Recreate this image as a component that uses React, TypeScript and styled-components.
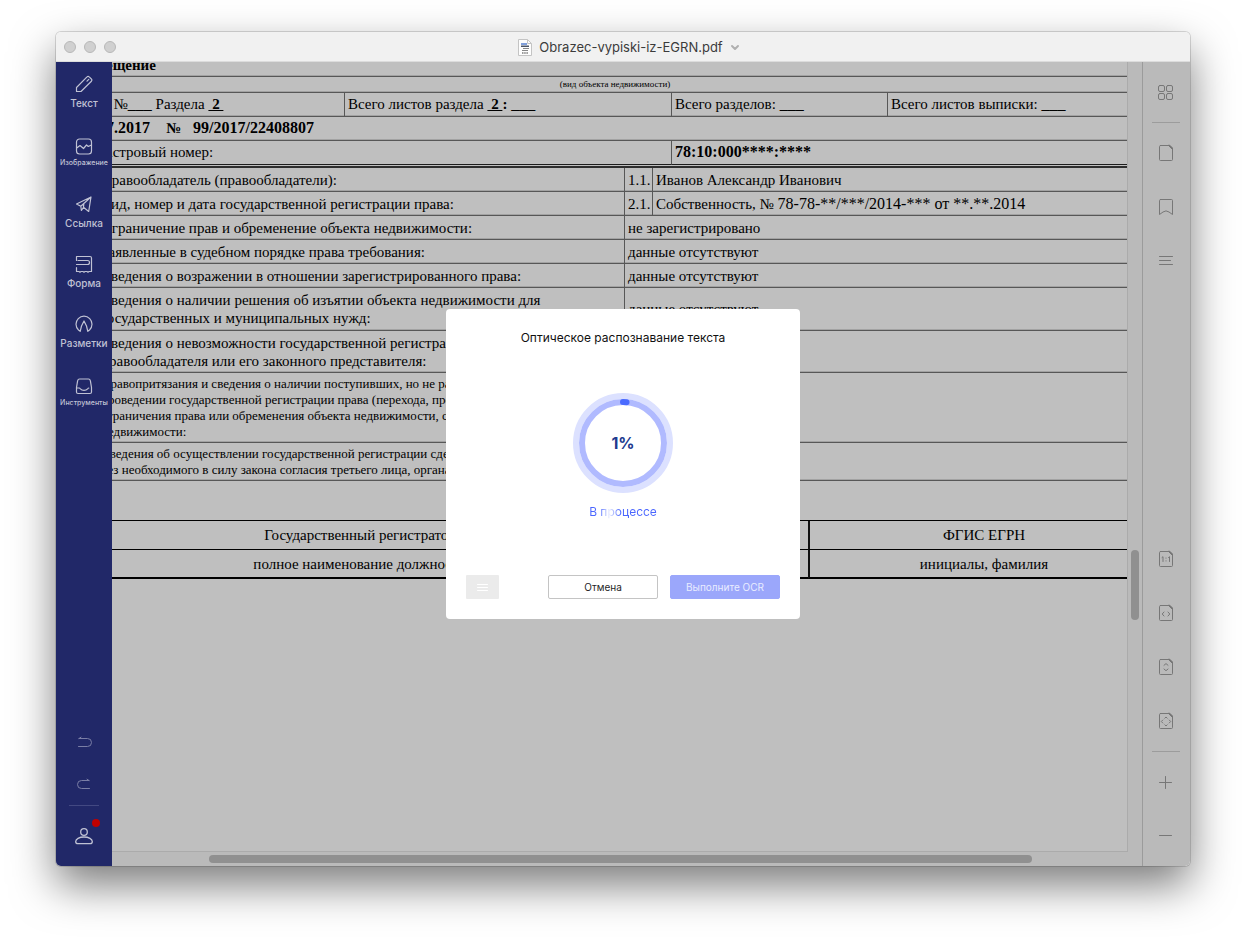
import React from "react";
import styled, { createGlobalStyle } from "styled-components";

const serif = '"Liberation Serif", "Times New Roman", serif';
const sans = 'Inter, "Liberation Sans", sans-serif';

const GlobalStyle = createGlobalStyle`
  * { box-sizing: border-box; }
  body { margin: 0; background: #fff; font-family: ${sans}; }
  button { font: inherit; border: 0; padding: 0; background: none; }
`;

const Desktop = styled.div`
  min-height: 100vh;
  padding: 32px 56px 80px;
  display: flex;
  flex-direction: column;
`;

const Window = styled.section`
  flex: 1;
  display: flex;
  flex-direction: column;
  border-radius: 5px;
  box-shadow: 0 0 0 1px rgba(0, 0, 0, 0.14), 0 19px 44px rgba(0, 0, 0, 0.52);
`;

const TitleBar = styled.header`
  height: 30px;
  display: grid;
  grid-template-columns: 1fr auto 1fr;
  align-items: center;
  background: #f1f1f1;
  border-bottom: 1px solid #dcdcdc;
  border-radius: 5px 5px 0 0;
`;

const Lights = styled.div`
  display: flex;
  gap: 8px;
  padding-left: 8px;
`;

const Light = styled.button`
  width: 12px;
  height: 12px;
  border-radius: 50%;
  background: #d0d0d0;
  border: 1px solid #b8b8b8;
`;

const FileTitle = styled.h1`
  margin: 0;
  padding: 1px 0 0 12px;
  display: flex;
  align-items: center;
  gap: 7px;
  font-size: 13px;
  line-height: 20px;
  font-weight: 400;
  color: #3b3b3b;
`;

const Body = styled.div`
  position: relative;
  flex: 1;
  display: flex;
  background: #bababa;
  border-radius: 0 0 5px 5px;
  overflow: hidden;
`;

const Sidebar = styled.nav`
  width: 56px;
  flex: none;
  display: flex;
  flex-direction: column;
  justify-content: space-between;
  background: #212868;
  color: #c0c2d4;
`;

const Group = styled.div`
  display: flex;
  flex-direction: column;
  align-items: center;
`;

const Tool = styled.button<{ $small?: boolean }>`
  width: 56px;
  height: 60px;
  padding-top: 10px;
  display: flex;
  flex-direction: column;
  align-items: center;
  color: inherit;
  font-size: ${(p) => (p.$small ? 7 : 10)}px;
  font-weight: 500;
  line-height: 14px;
  white-space: nowrap;
`;

const HistoryButton = styled.button`
  width: 56px;
  height: 42px;
  display: grid;
  place-items: center;
  color: #7a7ea6;
`;

const SideLine = styled.hr`
  width: 30px;
  height: 1px;
  margin: 0 0 10px;
  border: 0;
  background: #434982;
`;

const Account = styled.button`
  position: relative;
  width: 40px;
  height: 40px;
  margin-bottom: 10px;
  display: grid;
  place-items: center;
  color: #c0c2d4;
`;

const Dot = styled.span`
  position: absolute;
  top: 3px;
  right: 4px;
  width: 8px;
  height: 8px;
  border-radius: 50%;
  background: #c00000;
`;

const Viewer = styled.main`
  flex: 1;
  min-width: 0;
  display: grid;
  grid-template-columns: minmax(0, 1fr) 14px;
  grid-template-rows: minmax(0, 1fr) 14px;
`;

const Viewport = styled.div`
  overflow: hidden;
  background: #bfbfbf;
  border-right: 1px solid #ababab;
  border-bottom: 1px solid #ababab;
`;

const Sheet = styled.article`
  margin: -9px -31px 0 -36px;
  font-family: ${serif};
  color: #000;
`;

const VTrack = styled.div`
  display: flex;
  flex-direction: column;
  align-items: center;
`;

const HTrack = styled.div`
  display: flex;
  align-items: center;
`;

const Space = styled.span<{ $grow: number }>`
  flex: ${(p) => p.$grow} 1 0;
`;

const Thumb = styled.span<{ $grow: number }>`
  flex: ${(p) => p.$grow} 1 0;
  min-width: 8px;
  min-height: 8px;
  border-radius: 4px;
  background: #909090;
`;

const Table = styled.table<{ $gap?: number }>`
  width: 100%;
  margin-top: ${(p) => p.$gap ?? 0}px;
  table-layout: fixed;
  border-collapse: separate;
  border-spacing: 0;
  font-size: 15px;
  line-height: 18px;
`;

const HeadTable = styled(Table)`
  tr + tr td { padding-bottom: 2px; }
`;

const RightsTable = styled(Table)`
  border-top: 2px solid #2e2e2e;
`;

const SignTable = styled(Table)`
  border-top: 1px solid #000;
`;

const Cell = styled.td<{
  $h?: number;
  $line?: string;
  $divided?: boolean;
  $size?: number;
  $bold?: boolean;
  $lead?: boolean;
}>`
  height: ${(p) => p.$h ?? 24}px;
  padding: 0 2px 0 ${(p) => (p.$lead ? 30 : 3)}px;
  overflow: hidden;
  white-space: pre;
  border-bottom: 1px solid ${(p) => p.$line ?? "#575757"};
  border-left: ${(p) => (p.$divided ? "1px solid #575757" : "0")};
  box-shadow: inset 0 -1px ${(p) => (p.$line ? "transparent" : "#a2a2a2")};
  font-size: ${(p) => p.$size ?? 15}px;
  line-height: ${(p) => (p.$size === 13 ? 16 : 18)}px;
  font-weight: ${(p) => (p.$bold ? 700 : 400)};
`;

const Caption = styled(Cell)`
  padding-right: 7px;
  text-align: center;
  line-height: 12px;
`;

const Num = styled.span`
  font-size: 16px;
`;

const SignCell = styled.td<{ $last?: boolean; $divided?: boolean }>`
  height: 29px;
  padding: 0;
  text-align: center;
  white-space: nowrap;
  border-bottom: ${(p) => (p.$last ? 2 : 1)}px solid #000;
  border-left: ${(p) => (p.$divided ? "2px solid #111" : "0")};
`;

const Panel = styled.aside`
  width: 48px;
  flex: none;
  display: flex;
  flex-direction: column;
  justify-content: space-between;
  padding: 4px 2px 4px 0;
  border-left: 1px solid #9b9b9b;
  color: #777;
`;

const PanelButton = styled.button<{ $h?: number }>`
  width: 44px;
  height: ${(p) => p.$h ?? 54}px;
  display: grid;
  place-items: center;
  color: inherit;
`;

const PanelLine = styled.hr`
  width: 28px;
  height: 1px;
  margin: 2px 0 3px;
  border: 0;
  background: #9c9c9c;
`;

const ZoomLine = styled(PanelLine)`
  margin: 3px 0 4px;
`;

const Overlay = styled.div`
  position: absolute;
  inset: 0;
  display: grid;
  place-items: center;
`;

const Dialog = styled.div`
  width: 354px;
  height: 310px;
  padding: 20px;
  display: flex;
  flex-direction: column;
  align-items: center;
  background: #fff;
  border-radius: 4px;
`;

const DialogTitle = styled.h2`
  margin: 0 0 46px;
  font-size: 12px;
  line-height: 18px;
  font-weight: 400;
  color: #111;
`;

const Progress = styled.div`
  display: grid;
  place-items: center;
  > * { grid-area: 1 / 1; }
`;

const Percent = styled.strong`
  font-size: 16px;
  line-height: 20px;
  font-weight: 700;
  color: #213a8f;
`;

const Status = styled.p`
  margin: 10px 0 0;
  font-size: 12px;
  line-height: 18px;
  color: transparent;
  background: linear-gradient(90deg, #4a66ff 14%, #e8ecff 30%, #4a66ff 46%);
  background-clip: text;
  -webkit-background-clip: text;
`;

const Actions = styled.div`
  width: 100%;
  margin-top: auto;
  display: flex;
  gap: 12px;
`;

const ActionButton = styled.button<{ $primary?: boolean }>`
  width: 110px;
  height: 24px;
  border-radius: 2px;
  border: 1px solid ${(p) => (p.$primary ? "#9ba7fb" : "#c4c4c4")};
  background: ${(p) => (p.$primary ? "#9ba7fb" : "#fff")};
  color: ${(p) => (p.$primary ? "#e9ecff" : "#1f1f1f")};
  font-size: 10px;
  line-height: 14px;
`;

const MenuButton = styled.button`
  width: 33px;
  height: 24px;
  margin-right: auto;
  display: grid;
  place-items: center;
  background: #ebebeb;
  color: #fff;
  border-radius: 1px;
`;

const Icon = ({ w = 24, h = 24, sw = 1, children }: { w?: number; h?: number; sw?: number; children: React.ReactNode }) => (
  <svg width={w} height={h} viewBox={`0 0 ${w} ${h}`} fill="none" stroke="currentColor" strokeWidth={sw} strokeLinecap="round" strokeLinejoin="round" aria-hidden="true">
    {children}
  </svg>
);

const tools = [
  {
    label: "Текст",
    icon: <path d="M4.500 19.500V15.500L15 4.800a1.500 1.500 0 0 1 2.200 0l2.200 2.200a1.500 1.500 0 0 1 0 2.200L9 19.500zM15 9.200l1.800-1.800" />,
  },
  {
    label: "Изображение",
    small: true,
    icon: <path d="M7.500 7h9a3 3 0 0 1 3 3v9a3 3 0 0 1-3 3h-9a3 3 0 0 1-3-3v-9a3 3 0 0 1 3-3zM4.700 16l3.300-2.500 3.500 3 3-3.500 1.800 1.500 3-1.500" />,
  },
  {
    label: "Ссылка",
    icon: <path d="M19 5L4.500 12l4.300 2.200L19 5zM8.800 14.200l.6 4.300 2-3M19 5l-2.300 14.500-5.200-4.200.3-3.500" />,
  },
  {
    label: "Форма",
    icon: <path d="M4.500 8.500v-4h13.500a1.500 1.500 0 0 1 1.500 1.500v13.500h-2.500l-1 .7-1-.7h-2l-1 .7-1-.7h-2l-1 .7-1-.7h-2.500v-4M6 8.500h9.500a2 2 0 0 1 0 4H4.500" />,
  },
  {
    label: "Разметки",
    icon: <path d="M8.200 19.300l-1.700-1.300a8 8 0 1 1 11 0l-1.700 1.300M8.200 19.300l1.300-5.300 2.500-5 2.500 5 1.300 5.300" />,
  },
  {
    label: "Инструменты",
    small: true,
    icon: <path d="M7.500 7h9c1.200 0 1.600.6 1.900 1.800l1.100 6.700v4.500a1.500 1.500 0 0 1-1.500 1.500H6a1.500 1.500 0 0 1-1.500-1.500v-4.500L5.600 8.800C5.900 7.600 6.300 7 7.500 7zM4.500 16h2.700c.6 0 .9.4 1.200.8 1.700 2 5.500 2 7.200 0 .3-.4.6-.8 1.200-.8" />,
  },
];

const PageShape = () => (
  <>
    <path d="M6.500 4.500h9l3 3v11a1 1 0 0 1-1 1h-11a1 1 0 0 1-1-1v-13a1 1 0 0 1 1-1z" />
    <path d="M14.500 4.500l4 4v-1.500l-2.500-2.500z" fill="currentColor" />
  </>
);

const fitButtons = [
  { name: "Реальный размер", mark: <path d="M8 10.500l1-.8v4.800M14.500 10.500l1-.8v4.800M12 11v.2M12 13.800v.2" /> },
  { name: "По ширине", mark: <path d="M10 11l-1.800 2 1.800 2M14 11l1.800 2-1.800 2" /> },
  { name: "По высоте", mark: <path d="M10 10.300l2-1.700 2 1.700M10 14l2 1.700 2-1.700" /> },
  { name: "По странице", mark: <path d="M10.800 9.200l1.200-1.200 1.200 1.200M10.800 15.800l1.200 1.200 1.200-1.200M8.800 11l-1.500 1.500 1.500 1.500M15.200 11l1.500 1.500-1.500 1.500" /> },
];

type Right = { text: string; no?: string; value?: React.ReactNode; h?: number; size?: number };

const rights: Right[] = [
  { text: "Правообладатель (правообладатели):", no: "1.1.", value: "Иванов Александр Иванович" },
  {
    text: "Вид, номер и дата государственной регистрации права:",
    no: "2.1.",
    value: <>Собственность, № <Num>78-78-**/***/2014-*** от **.**.2014</Num></>,
  },
  { text: "Ограничение прав и обременение объекта недвижимости:", value: "не зарегистрировано" },
  { text: "Заявленные в судебном порядке права требования:", value: "данные отсутствуют" },
  { text: "Сведения о возражении в отношении зарегистрированного права:", value: "данные отсутствуют" },
  { text: "Сведения о наличии решения об изъятии объекта недвижимости для\nгосударственных и муниципальных нужд:", value: "данные отсутствуют", h: 43 },
  { text: "Сведения о невозможности государственной регистрации\nправообладателя или его законного представителя:", h: 42 },
  {
    text: "Правопритязания и сведения о наличии поступивших, но не рассмотренных\nпроведении государственной регистрации права (перехода, прекращения\nограничения права или обременения объекта недвижимости, сделки\nнедвижимости:",
    h: 70,
    size: 13,
  },
  { text: "Сведения об осуществлении государственной регистрации сделки\nбез необходимого в силу закона согласия третьего лица, органа", h: 38, size: 13 },
];

function DocumentSheet() {
  return (
    <Sheet>
      <HeadTable>
        <colgroup>
          <col style={{ width: 268 }} />
          <col style={{ width: 327 }} />
          <col style={{ width: 216 }} />
          <col />
        </colgroup>
        <tbody>
          <tr><Cell colSpan={4} $lead $bold>ещение</Cell></tr>
          <tr><Caption colSpan={4} $h={16} $size={9}>(вид объекта недвижимости)</Caption></tr>
          <tr>
            <Cell $lead>{"  №"}<Num>___</Num> Раздела <b><u> 2 </u></b></Cell>
            <Cell $divided>Всего листов раздела <b><u> 2 </u>:</b> <Num>___</Num></Cell>
            <Cell $divided>Всего разделов: <Num>___</Num></Cell>
            <Cell $divided>Всего листов выписки: <Num>___</Num></Cell>
          </tr>
          <tr><Cell colSpan={4} $lead $bold><Num>{"7.2017    "}</Num>№<Num>{"   99/2017/22408807"}</Num></Cell></tr>
          <tr>
            <Cell colSpan={2} $lead $line="#1c1c1c">астровый номер:</Cell>
            <Cell colSpan={2} $line="#1c1c1c" $divided $bold $size={16}>78:10:000****:****</Cell>
          </tr>
        </tbody>
      </HeadTable>
      <RightsTable $gap={1}>
        <colgroup>
          <col style={{ width: 22 }} />
          <col style={{ width: 526 }} />
          <col style={{ width: 28 }} />
          <col />
        </colgroup>
        <tbody>
          {rights.map((r, i) => (
            <tr key={i}>
              <Cell $h={r.h} />
              <Cell $h={r.h} $size={r.size}>{r.text}</Cell>
              {r.no && <Cell $divided>{r.no}</Cell>}
              <Cell $divided colSpan={r.no ? 1 : 2}>{r.value}</Cell>
            </tr>
          ))}
        </tbody>
      </RightsTable>
      <SignTable $gap={39}>
        <colgroup>
          <col style={{ width: 568 }} />
          <col style={{ width: 164 }} />
          <col />
        </colgroup>
        <tbody>
          <tr>
            <SignCell>Государственный регистратор</SignCell>
            <SignCell $divided />
            <SignCell $divided>ФГИС ЕГРН</SignCell>
          </tr>
          <tr>
            <SignCell $last>полное наименование должности</SignCell>
            <SignCell $last $divided />
            <SignCell $last $divided>инициалы, фамилия</SignCell>
          </tr>
        </tbody>
      </SignTable>
    </Sheet>
  );
}

export default function App() {
  return (
    <Desktop>
      <GlobalStyle />
      <Window>
        <TitleBar>
          <Lights>
            <Light aria-label="Закрыть" />
            <Light aria-label="Свернуть" />
            <Light aria-label="Развернуть" />
          </Lights>
          <FileTitle>
            <svg width="14" height="17" viewBox="0 0 14 17" fill="none" aria-hidden="true">
              <path d="M.5.500h9l4 4v12H.500z" fill="#fdfdfd" stroke="#c4c4c4" />
              <path d="M9.500.500v4h4" stroke="#c4c4c4" />
              <path d="M3 4h6v2H3z" fill="#7f9fdc" />
              <path d="M3 6.500h8v1.500H3z" fill="#4a5568" />
              <path d="M5 9.500h6M4 11.500h6" stroke="#888" />
              <path d="M4 14h6" stroke="#9a9a9a" strokeWidth="2" strokeDasharray="1.500 .7" />
            </svg>
            Obrazec-vypiski-iz-EGRN.pdf
            <Icon w={10} h={10} sw={2}><path d="M2 4l3 3 3-3" stroke="#b0b0b0" /></Icon>
          </FileTitle>
        </TitleBar>
        <Body>
          <Sidebar>
            <Group>
              {tools.map((t) => (
                <Tool key={t.label} $small={t.small}>
                  <Icon sw={1.200}>{t.icon}</Icon>
                  {t.label}
                </Tool>
              ))}
            </Group>
            <Group>
              <HistoryButton aria-label="Отменить действие">
                <Icon><path d="M7 8.500h8.500a4 4 0 0 1 0 8H6.500M7 8.500L9 7.200" /></Icon>
              </HistoryButton>
              <HistoryButton aria-label="Повторить действие">
                <Icon><path d="M17 8.500H9.500a4 4 0 0 0 0 8H17.500M17 8.500L15 7.200" /></Icon>
              </HistoryButton>
              <SideLine />
              <Account aria-label="Профиль">
                <Icon sw={1.300}>
                  <circle cx="12" cy="8" r="3.300" />
                  <path d="M12 13c4.800 0 8.300 2 8.300 4.500 0 1.500-1 2.200-2.300 2.200H6c-1.300 0-2.300-.7-2.300-2.200C3.700 15 7.200 13 12 13z" />
                </Icon>
                <Dot />
              </Account>
            </Group>
          </Sidebar>
          <Viewer>
            <Viewport><DocumentSheet /></Viewport>
            <VTrack>
              <Space $grow={488} />
              <Thumb $grow={70} />
              <Space $grow={232} />
            </VTrack>
            <HTrack>
              <Space $grow={97} />
              <Thumb $grow={823} />
              <Space $grow={96} />
            </HTrack>
          </Viewer>
          <Panel>
            <Group>
              <PanelButton aria-label="Миниатюры">
                <Icon>
                  <rect x="4.500" y="4.500" width="6" height="6" rx="1.500" />
                  <rect x="12.500" y="4.500" width="6" height="6" rx="1.500" />
                  <rect x="4.500" y="12.500" width="6" height="6" rx="1.500" />
                  <rect x="12.500" y="12.500" width="6" height="6" rx="1.500" />
                </Icon>
              </PanelButton>
              <PanelLine />
              <PanelButton aria-label="Страница"><Icon><PageShape /></Icon></PanelButton>
              <PanelButton aria-label="Закладки">
                <Icon><path d="M6.500 4.500h11a1 1 0 0 1 1 1v14l-3.500-2.500a5 5 0 0 0-6 0l-3.500 2.500v-14a1 1 0 0 1 1-1z" /></Icon>
              </PanelButton>
              <PanelButton aria-label="Содержание"><Icon><path d="M5.500 7.500h13M5.500 11.500h11M5.500 15.500h13" /></Icon></PanelButton>
            </Group>
            <Group>
              {fitButtons.map((f) => (
                <PanelButton key={f.name} aria-label={f.name}>
                  <Icon><PageShape />{f.mark}</Icon>
                </PanelButton>
              ))}
              <ZoomLine />
              <PanelButton $h={53} aria-label="Увеличить"><Icon><path d="M5.500 11.500h12M11.500 5.500v12" /></Icon></PanelButton>
              <PanelButton $h={53} aria-label="Уменьшить"><Icon><path d="M5.500 11.500h12" /></Icon></PanelButton>
            </Group>
          </Panel>
          <Overlay>
            <Dialog role="dialog" aria-labelledby="ocr-title">
              <DialogTitle id="ocr-title">Оптическое распознавание текста</DialogTitle>
              <Progress>
                <svg width="100" height="100" viewBox="0 0 100 100" fill="none" aria-hidden="true">
                  <circle cx="50" cy="50" r="47" stroke="#dce1ff" strokeWidth="6" />
                  <circle cx="50" cy="50" r="41" stroke="#b0baff" strokeWidth="6" />
                  <path d="M50 9a41 41 0 0 1 3.500.15" stroke="#4a6bff" strokeWidth="6" strokeLinecap="round" />
                </svg>
                <Percent>1%</Percent>
              </Progress>
              <Status>В процессе</Status>
              <Actions>
                <MenuButton aria-label="Параметры">
                  <Icon w={11} h={9}><path d="M.5 1.500h10M.5 4.500h10M.5 7.500h10" /></Icon>
                </MenuButton>
                <ActionButton>Отмена</ActionButton>
                <ActionButton $primary>Выполните OCR</ActionButton>
              </Actions>
            </Dialog>
          </Overlay>
        </Body>
      </Window>
    </Desktop>
  );
}
